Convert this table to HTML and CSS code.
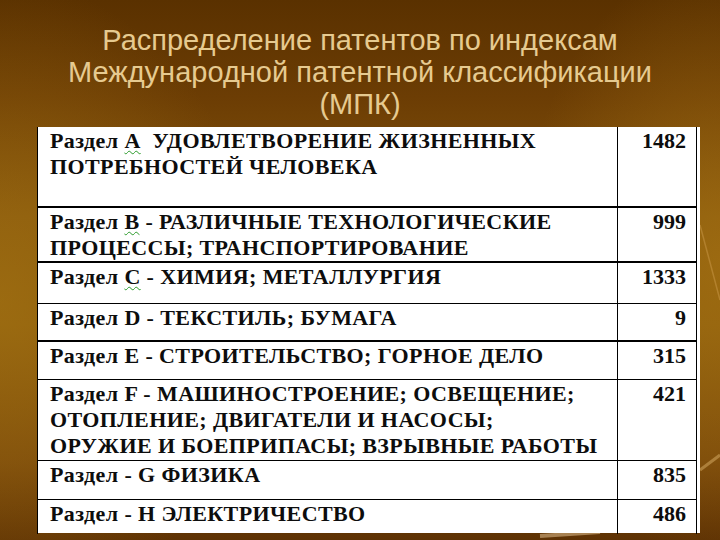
FILE: index.html
```html
<!DOCTYPE html>
<html lang="ru">
<head>
<meta charset="utf-8">
<link rel="stylesheet" href="styles.css">
</head>
<body>
<div class="slide">
  <svg class="deco" width="720" height="540" viewBox="0 0 720 540">
    <line x1="700" y1="225" x2="720" y2="300" stroke="#e0b060" stroke-opacity="0.35" stroke-width="1.5"/>
    <line x1="700" y1="470" x2="720" y2="455" stroke="#f0c880" stroke-opacity="0.4" stroke-width="3"/>
    <line x1="540" y1="536" x2="600" y2="532" stroke="#f0d0a0" stroke-opacity="0.5" stroke-width="4"/>
  </svg>
  <h1 class="title">Распределение патентов по индексам<br>Международной патентной классификации<br>(МПК)</h1>
  <div class="sheet">
    <table class="ipc">
      <tr class="r-a"><td class="name">Раздел <span class="sq">А</span>&nbsp; УДОВЛЕТВОРЕНИЕ ЖИЗНЕННЫХ<br>ПОТРЕБНОСТЕЙ ЧЕЛОВЕКА</td><td class="num">1482</td></tr>
      <tr class="r-b"><td class="name">Раздел <span class="sq">В</span> - РАЗЛИЧНЫЕ ТЕХНОЛОГИЧЕСКИЕ<br>ПРОЦЕССЫ; ТРАНСПОРТИРОВАНИЕ</td><td class="num">999</td></tr>
      <tr class="r-c thick"><td class="name">Раздел <span class="sq">С</span> - ХИМИЯ; МЕТАЛЛУРГИЯ</td><td class="num">1333</td></tr>
      <tr class="r-d"><td class="name">Раздел D - ТЕКСТИЛЬ; БУМАГА</td><td class="num">9</td></tr>
      <tr class="r-e thick"><td class="name">Раздел Е - СТРОИТЕЛЬСТВО; ГОРНОЕ ДЕЛО</td><td class="num">315</td></tr>
      <tr class="r-f"><td class="name">Раздел F - МАШИНОСТРОЕНИЕ; ОСВЕЩЕНИЕ;<br>ОТОПЛЕНИЕ; ДВИГАТЕЛИ И НАСОСЫ;<br>ОРУЖИЕ И БОЕПРИПАСЫ; ВЗРЫВНЫЕ РАБОТЫ</td><td class="num">421</td></tr>
      <tr class="r-g"><td class="name">Раздел - G ФИЗИКА</td><td class="num">835</td></tr>
      <tr class="r-h"><td class="name">Раздел - Н ЭЛЕКТРИЧЕСТВО</td><td class="num">486</td></tr>
    </table>
  </div>
</div>
</body>
</html>
```
FILE: styles.css
```css
html, body {
  margin: 0;
  padding: 0;
}
body {
  width: 720px;
  height: 540px;
  overflow: hidden;
}
.slide {
  position: relative;
  width: 720px;
  height: 540px;
  box-sizing: border-box;
  padding-top: 24px;
  background:
    radial-gradient(ellipse 260px 320px at 0px 300px, rgba(170, 120, 20, 0.55), rgba(170, 120, 20, 0) 100%),
    radial-gradient(ellipse 200px 300px at 720px 260px, rgba(170, 118, 20, 0.6), rgba(170, 118, 20, 0) 100%),
    linear-gradient(to bottom, #5a3100 0%, #6c3d04 18%, #84550c 40%, #8a5b0c 60%, #78470a 85%, #5e3204 100%);
}
.deco {
  position: absolute;
  left: 0;
  top: 0;
}
.title {
  position: relative;
  margin: 0;
  font-family: "Liberation Sans", Arial, sans-serif;
  font-weight: normal;
  font-size: 29px;
  line-height: 32px;
  color: #e6ca90;
  text-align: center;
}
.sheet {
  position: relative;
  margin: 7px 0 0 37px;
  width: 663px;
  height: 406px;
  background: #fff;
  box-sizing: border-box;
  padding-right: 3px;
}
.ipc {
  width: 660px;
  height: 406px;
  border-collapse: collapse;
  font-family: "Liberation Serif", "Times New Roman", serif;
  font-weight: bold;
  font-size: 22px;
  letter-spacing: 0.4px;
  line-height: 26px;
  color: #0d0d0d;
  white-space: nowrap;
}
.ipc td {
  vertical-align: top;
  padding: 1px 10px 0 12px;
  border-left: 1px solid #000;
  border-right: 1px solid #000;
}
.ipc tr + tr td {
  border-top: 1px solid #000;
}
.ipc tr.r-b td,
.ipc tr.thick td {
  border-top: 2px solid #000;
}
.ipc .name {
  width: 557px;
}
.ipc .num {
  text-align: right;
  padding-right: 10px;
  padding-left: 0;
  letter-spacing: 0;
}
.sq {
  text-decoration: underline wavy #2a9a2a 1px;
  text-underline-offset: 2px;
}
.r-a { height: 80px; }
.r-b { height: 54px; }
.r-c { height: 41px; }
.r-d { height: 38px; }
.r-e { height: 38px; }
.r-f { height: 81px; }
.r-g { height: 39px; }
.r-h { height: 35px; }
```
